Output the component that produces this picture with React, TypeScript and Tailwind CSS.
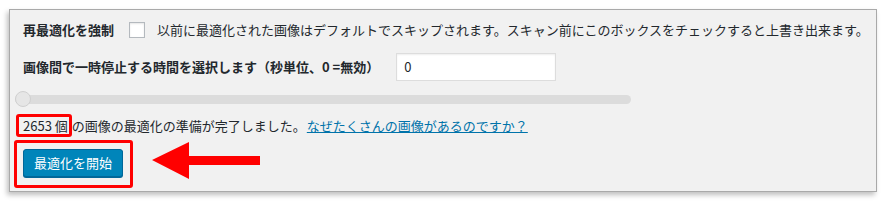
import React from 'react';

const font = { fontFamily: '"Noto Sans CJK JP", "Noto Sans", "Liberation Sans", sans-serif' };

const ArrowLeft: React.FC = () => (
  <svg width="108" height="37" viewBox="0 0 108 37" className="block">
    <polygon points="0,18 37,0 37,14 108,14 108,23 37,23 37,37" fill="#ff0000" />
  </svg>
);

export default function App() {
  return (
    <div className="min-h-screen bg-white" style={font}>
      <div className="ml-[9px] pt-[9px]">
        <div className="flex h-[183px] w-[868px] flex-col border border-[#a9a9a9] bg-[#f1f1f1] text-[13px] text-[#23282d] shadow-[-2px_3px_5px_rgba(0,0,0,0.25)]">
          <div className="mt-[11px] flex h-[18px] items-center pl-[13px]">
            <span className="font-bold">再最適化を強制</span>
            <span className="ml-[15px] h-4 w-4 border border-[#b4b9be] bg-white shadow-[inset_0_1px_2px_rgba(0,0,0,0.1)]" />
            <span className="ml-[12px]">以前に最適化された画像はデフォルトでスキップされます。スキャン前にこのボックスをチェックすると上書き出来ます。</span>
          </div>

          <div className="mt-[14px] flex h-[28px] items-center pl-[13px]">
            <span className="font-bold">画像間で一時停止する時間を選択します（秒単位、0 =無効）</span>
            <div className="ml-[17px] flex h-[28px] w-[160px] items-center border border-[#dddddd] bg-white pl-[7px] shadow-[inset_0_1px_2px_rgba(0,0,0,0.07)]">
              0
            </div>
          </div>

          <div className="relative mt-[10px] ml-[5px] flex h-4 w-[616px] items-center">
            <div className="h-[9px] w-full rounded-full bg-[#dcdcdc]" />
            <span className="absolute left-0 top-0 h-4 w-4 rounded-full border border-[#d0d0d0] bg-[#e6e6e6]" />
          </div>

          <div className="mt-[7px] flex h-[23px] items-center pl-[6px]">
            <span className="flex h-[23px] items-center rounded-[3px] border-[3px] border-[#ff0000] pl-[4px] pr-[1px]">2653 個</span>
            <span>の画像の最適化の準備が完了しました。</span>
            <a href="#" className="ml-[1px] text-[#0073aa] underline">なぜたくさんの画像があるのですか？</a>
          </div>

          <div className="mt-[3px] flex items-start pl-[4px]">
            <div className="h-[48px] w-[119px] rounded-[3px] border-[3px] border-[#ff0000] pl-[6px] pt-[6px]">
              <button
                type="button"
                className="flex h-[28px] w-[100px] items-center justify-center rounded-[3px] border border-[#006799] bg-[#0085ba] text-[13px] text-white shadow-[0_1px_0_#006799]"
              >
                最適化を開始
              </button>
            </div>
            <div className="ml-[19px] mt-[2px]">
              <ArrowLeft />
            </div>
          </div>
        </div>
      </div>
    </div>
  );
}
